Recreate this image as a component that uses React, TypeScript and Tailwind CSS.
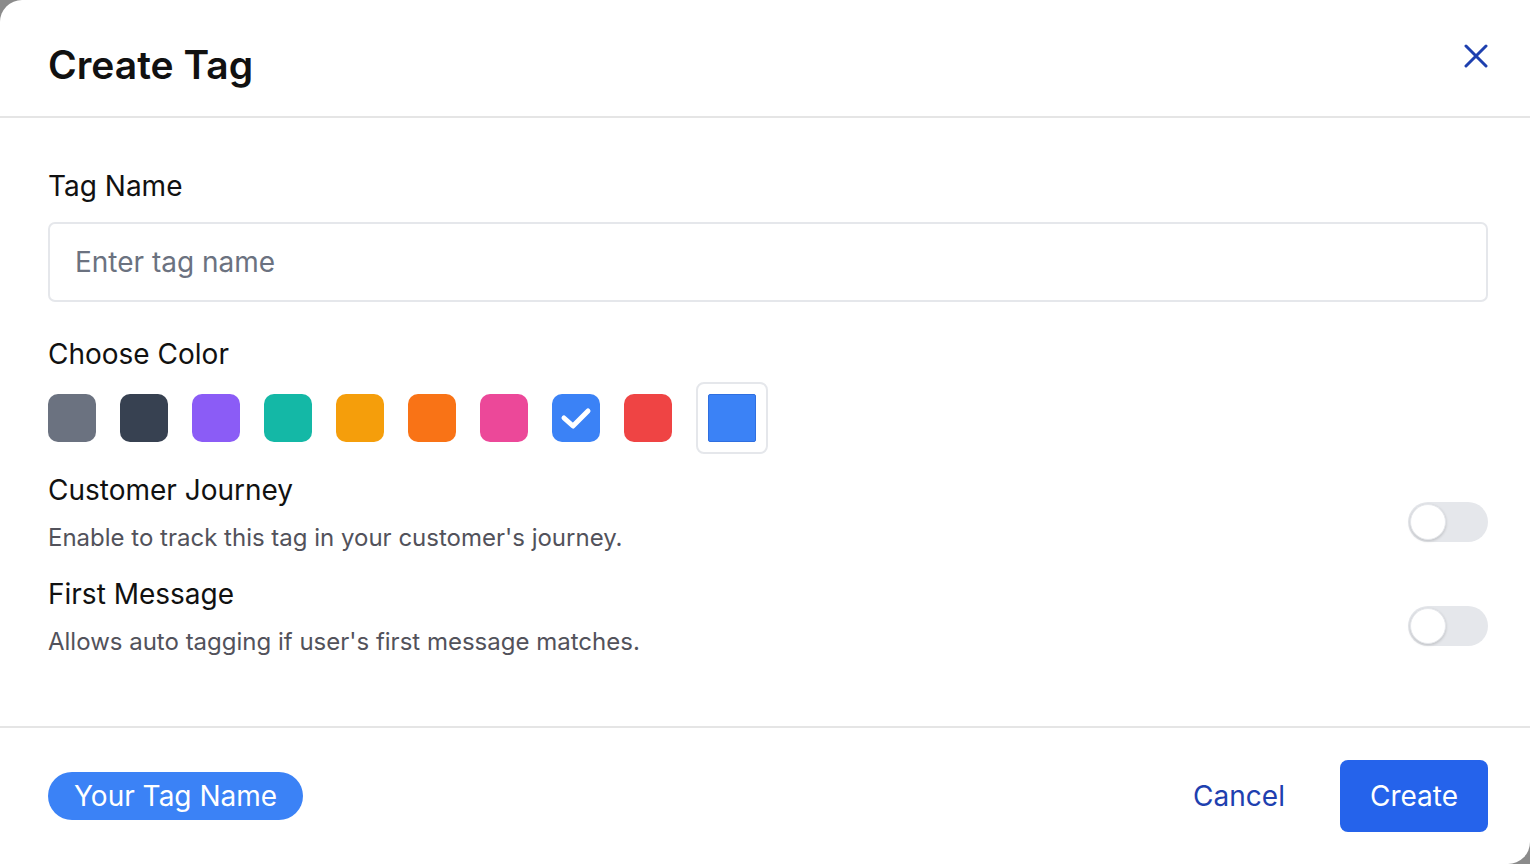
import { useState } from 'react'

const COLORS = ['#6b7280', '#374151', '#8b5cf6', '#14b8a6', '#f59e0b', '#f97316', '#ec4899', '#3b82f6', '#ef4444']

function Toggle({ on, onChange }: { on: boolean; onChange: () => void }) {
  return (
    <button
      onClick={onChange}
      className={`relative mt-[32px] h-[40px] w-[80px] shrink-0 rounded-full transition-colors ${on ? 'bg-blue-600' : 'bg-[#e5e7eb]'}`}
    >
      <span
        className={`absolute top-[2px] h-[36px] w-[36px] rounded-full border border-[#e5e7eb] bg-white shadow-[0_1px_3px_rgba(0,0,0,0.18)] transition-all ${on ? 'left-[42px]' : 'left-[2px]'}`}
      />
    </button>
  )
}

export default function App() {
  const [selected, setSelected] = useState(7)
  const [journey, setJourney] = useState(false)
  const [firstMsg, setFirstMsg] = useState(false)
  const [name, setName] = useState('')

  return (
    <div className="h-[864px] w-full overflow-hidden bg-[#8b8b8b]" style={{ fontFamily: 'Inter, "Noto Sans", sans-serif' }}>
      <div className="flex h-full w-full flex-col rounded-tl-[22px] rounded-br-[22px] bg-white">
        <div className="flex h-[116px] shrink-0 items-center justify-between pl-12 pr-[42px]">
          <h1 className="mt-[12px] text-[39px] font-semibold leading-none text-[#111111]">Create Tag</h1>
          <button className="mb-[4px] flex h-[24px] w-[24px] items-center justify-center">
            <svg width="24" height="24" viewBox="0 0 24 24" fill="none" stroke="#1e40af" strokeWidth="3" strokeLinecap="round">
              <path d="M2 2L22 22M22 2L2 22" />
            </svg>
          </button>
        </div>
        <div className="h-[2px] shrink-0 bg-[#e5e5e5]" />

        <div className="flex flex-1 flex-col pl-12 pr-[42px] pt-12">
          <label className="text-[28px] leading-[40px] text-[#111111]">Tag Name</label>
          <input
            value={name}
            onChange={e => setName(e.target.value)}
            placeholder="Enter tag name"
            className="mt-4 h-[80px] w-full rounded-[7px] border-2 border-[#e5e7eb] px-[25px] text-[28px] text-[#111] placeholder:text-[#6b7280] focus:outline-none"
          />

          <label className="mt-8 text-[28px] leading-[40px] text-[#111111]">Choose Color</label>
          <div className="mt-2 flex items-center gap-6">
            {COLORS.map((c, i) => (
              <button
                key={c}
                onClick={() => setSelected(i)}
                className="relative h-[48px] w-[48px] rounded-[10px]"
                style={{ background: c }}
              >
                {selected === i && (
                  <svg className="absolute left-0 top-0" width="48" height="48" viewBox="0 0 48 48" fill="none" stroke="white" strokeWidth="5" strokeLinecap="round" strokeLinejoin="round">
                    <path d="M12 24L21 32L36 17" />
                  </svg>
                )}
              </button>
            ))}
            <div className="flex h-[72px] w-[72px] items-center justify-center rounded-[8px] border-2 border-[#e5e7eb] bg-white">
              <div className="h-[48px] w-[48px] rounded-[2px] border border-[#2f6fe0] bg-[#3b82f6]" />
            </div>
          </div>

          <div className="mt-4 flex items-start justify-between">
            <div>
              <div className="text-[28px] leading-[40px] text-[#111111]">Customer Journey</div>
              <div className="mt-[10px] text-[24px] leading-[36px] text-[#52525b]">Enable to track this tag in your customer's journey.</div>
            </div>
            <Toggle on={journey} onChange={() => setJourney(!journey)} />
          </div>

          <div className="mt-[18px] flex items-start justify-between">
            <div>
              <div className="text-[28px] leading-[40px] text-[#111111]">First Message</div>
              <div className="mt-[10px] text-[24px] leading-[36px] text-[#52525b]">Allows auto tagging if user's first message matches.</div>
            </div>
            <Toggle on={firstMsg} onChange={() => setFirstMsg(!firstMsg)} />
          </div>
        </div>

        <div className="h-[2px] shrink-0 bg-[#e5e5e5]" />
        <div className="flex h-[136px] shrink-0 items-center justify-between pl-12 pr-[42px]">
          <span
            className="flex h-[48px] items-center rounded-full px-[26px] text-[28px] text-white"
            style={{ background: COLORS[selected] }}
          >
            {name || 'Your Tag Name'}
          </span>
          <div className="flex items-center gap-[55px]">
            <button className="text-[28px] text-[#1e40af]">Cancel</button>
            <button className="h-[72px] rounded-[8px] bg-[#2563eb] px-[30px] text-[28px] text-white">Create</button>
          </div>
        </div>
      </div>
    </div>
  )
}
